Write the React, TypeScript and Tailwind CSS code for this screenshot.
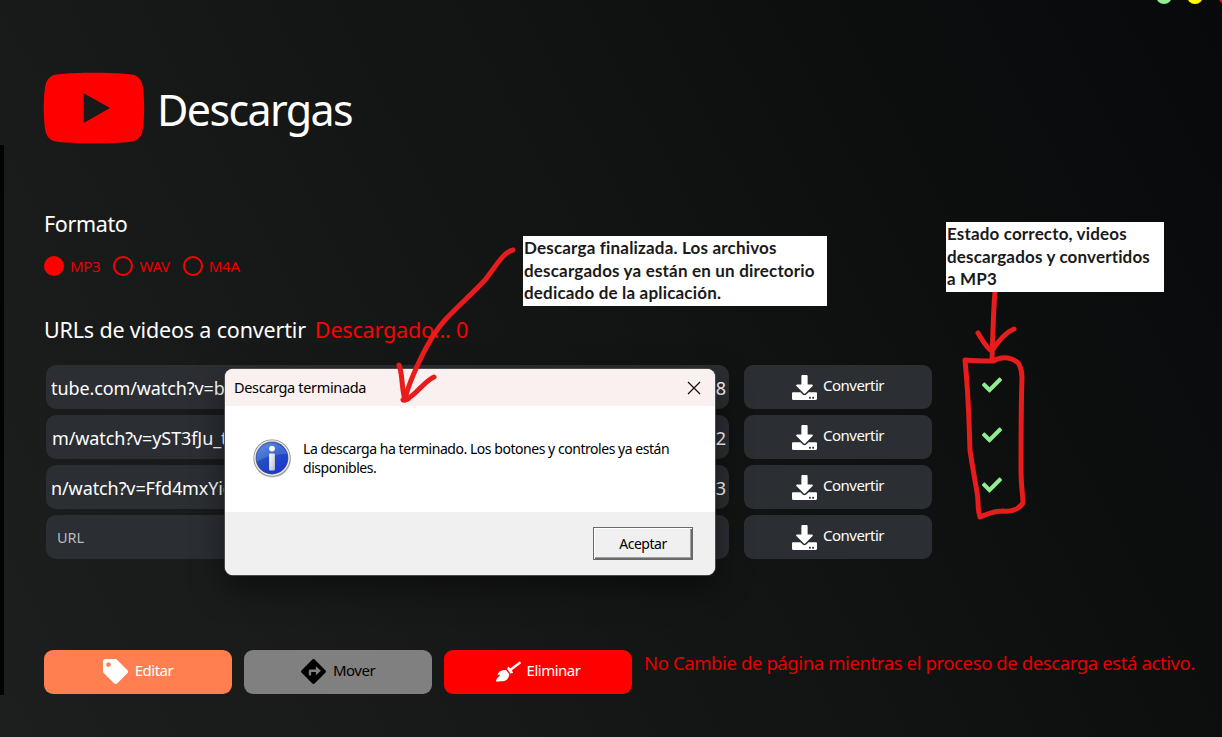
import React from "react";
import { FaBroom, FaCheck, FaDirections, FaDownload, FaTag, FaYoutube } from "react-icons/fa";

const rows = [
  { start: "tube.com/watch?v=b", end: "Q8", done: true, pad: "pl-[5px]" },
  { start: "m/watch?v=yST3fJu_t", end: "2", done: true, pad: "pl-[6px]" },
  { start: "n/watch?v=Ffd4mxYie", end: "3", done: true, pad: "pl-[5px]" },
  { start: "", end: "", done: false, pad: "pl-[11px]" },
];

function Radio({ label, checked }: { label: string; checked?: boolean }) {
  return (
    <label className="flex h-5 items-center gap-[6px]">
      <span className={checked ? "size-5 rounded-full bg-[#ff0000]" : "size-5 rounded-full border-2 border-[#ff0000]"} />
      <span className="text-[15px] leading-5 tracking-[-0.3px] text-[#e60000]">{label}</span>
    </label>
  );
}

function ActionButton({ className, icon, label, gap }: { className: string; icon: React.ReactNode; label: string; gap: string }) {
  return (
    <button className={`flex h-11 w-[188px] items-center justify-center rounded-[9px] ${gap} ${className}`}>
      {icon}
      <span className="-mt-[4px] text-[15px] leading-5 tracking-[-0.5px]">{label}</span>
    </button>
  );
}

function InfoIcon() {
  return (
    <svg className="size-10 shrink-0" viewBox="0 0 40 40">
      <defs>
        <linearGradient id="ball" x1="0" y1="0" x2="0.6" y2="1">
          <stop offset="0" stopColor="#5f8fea" />
          <stop offset="0.5" stopColor="#2450c0" />
          <stop offset="1" stopColor="#1c36d0" />
        </linearGradient>
        <linearGradient id="stem" x1="0" y1="0" x2="1" y2="1">
          <stop offset="0" stopColor="#ffffff" />
          <stop offset="1" stopColor="#b9bcc8" />
        </linearGradient>
      </defs>
      <circle cx="20.4" cy="21" r="18.6" fill="#000" opacity="0.22" />
      <circle cx="20" cy="20" r="18.6" fill="#8c8c8c" />
      <circle cx="20" cy="20" r="17.8" fill="#f1f1f1" />
      <circle cx="20" cy="20" r="16.4" fill="#555d78" />
      <circle cx="20" cy="20" r="15.8" fill="url(#ball)" />
      <path d="M4.6 22a15.8 15.8 0 0 1 30.6-6C24 16 14 18 5 24z" fill="#7ea6f5" opacity="0.3" />
      <circle cx="20" cy="10.6" r="2.9" fill="#fff" />
      <rect x="17.1" y="15.4" width="5.8" height="17" rx="1" fill="url(#stem)" />
    </svg>
  );
}

function Dialog() {
  return (
    <div className="absolute left-[225px] top-[369px] flex h-[206px] w-[490px] flex-col overflow-hidden rounded-lg bg-white text-black shadow-[0_0_0_1px_#484a4c,0_12px_32px_rgba(0,0,0,0.5)]">
      <div className="flex h-[37px] items-center justify-between bg-[#f9f0ef] pl-[9px] pr-[14px]">
        <span className="text-[14.5px] tracking-[-0.35px]">Descarga terminada</span>
        <svg className="size-[14px]" viewBox="0 0 14 14" stroke="#111" strokeWidth="1.2" fill="none">
          <path d="M1 1l12 12M13 1L1 13" />
        </svg>
      </div>
      <div className="flex h-[106px] gap-[11px] pl-[27px] pt-[32px]">
        <InfoIcon />
        <p className="pt-px text-[14px] leading-[19px] tracking-[-0.46px]">
          La descarga ha terminado. Los botones y controles ya están
          <br />
          disponibles.
        </p>
      </div>
      <div className="flex grow justify-end bg-[#f0f0f0] pr-[22px] pt-[15px]">
        <button className="flex h-[33px] w-[100px] items-center justify-center border border-[#696969] bg-[#f0f0f0] pb-px text-[14px] tracking-[-0.45px] shadow-[inset_1px_1px_0_#fff,inset_-1px_-1px_0_#696969,inset_-2px_-2px_0_#a0a0a0]">
          Aceptar
        </button>
      </div>
    </div>
  );
}

export default function App() {
  return (
    <div className="relative flex h-[737px] w-[1222px] overflow-hidden bg-[linear-gradient(62deg,#1d1e1e_0%,#161817_35%,#0d0e0e_75%,#08090b_100%)] font-['Noto_Sans',sans-serif] text-white">
      <div className="mt-[145px] h-[550px] w-1 shrink-0 bg-[#030303]" />

      <div className="absolute -top-[12px] right-[-12px] flex gap-[15px]">
        <span className="size-4 rounded-full bg-[#90ee90]" />
        <span className="size-4 rounded-full bg-[#ffff00]" />
        <span className="size-4 rounded-full bg-[#ff0000]" />
      </div>

      <main className="flex grow flex-col pl-10 pt-[72px]">
        <header className="flex h-[74px] items-center gap-[10px]">
          <FaYoutube className="-ml-[3px] -mt-[2px] size-[106px] text-[#ff0000]" />
          <h1 className="pt-[2px] text-[43px] leading-[74px] tracking-[-1.6px]">Descargas</h1>
        </header>

        <h2 className="mt-[62px] text-[21.5px] leading-8 tracking-[-0.35px]">Formato</h2>
        <div className="mt-4 flex h-5 gap-[13px]">
          <Radio label="MP3" checked />
          <Radio label="WAV" />
          <Radio label="M4A" />
        </div>

        <div className="mt-[38px] flex h-8 gap-[9px] text-[21.5px] leading-8 tracking-[-0.17px]">
          <h2>URLs de videos a convertir</h2>
          <span className="text-[#ff0000]">Descargado... 0</span>
        </div>

        <div className="mt-[19px] flex flex-col gap-[6px]">
          {rows.map((r, i) => (
            <div key={i} className="flex h-11 items-center">
              <div className={`ml-[2px] flex h-11 w-[683px] items-center justify-between rounded-[10px] bg-[#2b2e33] pr-[3px] pt-[2px] text-[18px] tracking-[-0.1px] ${r.pad}`}>
                {r.start ? <span>{r.start}</span> : <span className="text-[14.5px] text-[#b9bbbd]">URL</span>}
                <span>{r.end}</span>
              </div>
              <div className="ml-[15px]">
                <ActionButton className="bg-[#2b2e33]" gap="gap-[6px]" label="Convertir" icon={<FaDownload className="size-[25px]" />} />
              </div>
              {r.done && <FaCheck className="-mt-[5px] ml-[50px] size-5 text-[#90ee90]" />}
            </div>
          ))}
        </div>

        <div className="mt-[91px] flex gap-3">
          <ActionButton className="bg-[#ff7f50] pb-px" gap="gap-[7px]" label="Editar" icon={<FaTag className="size-[25px]" />} />
          <ActionButton className="bg-[#808080] pb-px text-black" gap="gap-[7px]" label="Mover" icon={<FaDirections className="size-[25px]" />} />
          <ActionButton className="bg-[#ff0000] pb-px" gap="gap-[6px]" label="Eliminar" icon={<FaBroom className="size-[25px]" />} />
          <p className="whitespace-nowrap pt-[1px] text-[18.5px] leading-6 tracking-[-0.39px] text-[#e60000]">
            No Cambie de página mientras el proceso de descarga está activo.
          </p>
        </div>
      </main>

      <Dialog />

      <svg className="pointer-events-none absolute inset-0" width="1222" height="737" viewBox="0 0 1222 737" fill="none" stroke="#e81c1c" strokeWidth="5" strokeLinecap="round" strokeLinejoin="round">
        <path d="M513 250C503 252 495 268 485 280C473 293 456 308 445 320C434 332 426 347 419 362C413 375 407 388 405 400" />
        <path d="M399 365C403 375 401 386 405 400C416 396 423 382 434 377" />
        <path d="M403 400L408 399" />
        <path d="M995 292C993 315 993 335 992 360M978 333C983 341 987 349 992 351C997 343 1004 333 1014 329" />
        <path d="M965 360C977 361 985 361 993 361C1003 355 1014 358 1019 364C1021 368 1022 372 1022 378C1021 405 1021 440 1021 470C1021 486 1023 496 1023 503C1019 509 1012 512 1003 511C992 511 988 514 980 517C977 508 979 502 977 492C974 475 971 458 970 450C969 425 969 400 965 360Z" />
      </svg>

      <div className="absolute left-[523px] top-[236px] h-[70px] w-[304px] whitespace-nowrap bg-white pl-px pt-[1px] font-['Lato',sans-serif] text-[17px] font-bold leading-[22.7px] tracking-[0.18px] text-[#1a1a1a]">
        Descarga finalizada. Los archivos
        <br />
        descargados ya están en un directorio
        <br />
        dedicado de la aplicación.
      </div>
      <div className="absolute left-[946px] top-[222px] h-[70px] w-[218px] whitespace-nowrap bg-white pl-[1px] pt-[1px] font-['Lato',sans-serif] text-[17px] font-bold leading-[22.7px] tracking-[0.16px] text-[#1a1a1a]">
        Estado correcto, videos
        <br />
        descargados y convertidos
        <br />a MP3
      </div>
    </div>
  );
}
